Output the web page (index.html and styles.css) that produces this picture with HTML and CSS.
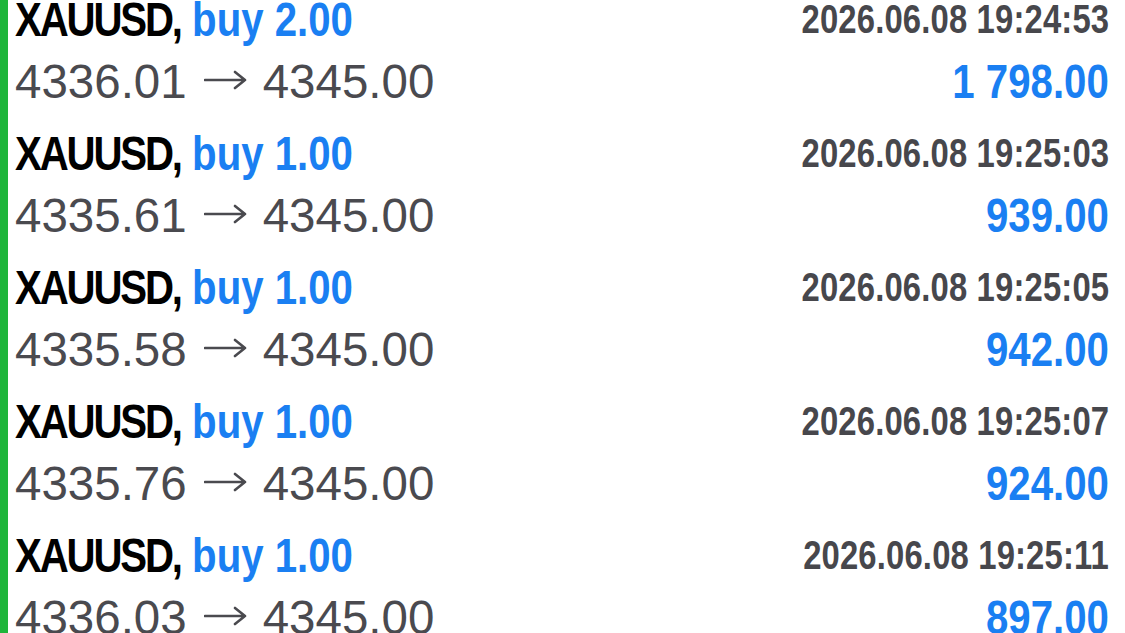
FILE: index.html
```html
<!DOCTYPE html>
<html lang="en">
<head>
	<meta charset="UTF-8"/>
	<title>History</title>
	<link rel="stylesheet" href="styles.css">
</head>
<body>
<div class="deals">
	<div class="deal">
		<div class="deal_head">
			<span class="deal_sym"><span class="deal_name">XAUUSD,</span> <span class="deal_type">buy 2.00</span></span>
			<span class="deal_time">2026.06.08 19:24:53</span>
		</div>
		<div class="deal_body">
			<span class="deal_price">4336.01<svg class="arrow" viewBox="0 0 43 20"><path d="M1 10H41M31 2L41 10L31 18"/></svg>4345.00</span>
			<span class="deal_profit">1 798.00</span>
		</div>
	</div>
	<div class="deal">
		<div class="deal_head">
			<span class="deal_sym"><span class="deal_name">XAUUSD,</span> <span class="deal_type">buy 1.00</span></span>
			<span class="deal_time">2026.06.08 19:25:03</span>
		</div>
		<div class="deal_body">
			<span class="deal_price">4335.61<svg class="arrow" viewBox="0 0 43 20"><path d="M1 10H41M31 2L41 10L31 18"/></svg>4345.00</span>
			<span class="deal_profit">939.00</span>
		</div>
	</div>
	<div class="deal">
		<div class="deal_head">
			<span class="deal_sym"><span class="deal_name">XAUUSD,</span> <span class="deal_type">buy 1.00</span></span>
			<span class="deal_time">2026.06.08 19:25:05</span>
		</div>
		<div class="deal_body">
			<span class="deal_price">4335.58<svg class="arrow" viewBox="0 0 43 20"><path d="M1 10H41M31 2L41 10L31 18"/></svg>4345.00</span>
			<span class="deal_profit">942.00</span>
		</div>
	</div>
	<div class="deal">
		<div class="deal_head">
			<span class="deal_sym"><span class="deal_name">XAUUSD,</span> <span class="deal_type">buy 1.00</span></span>
			<span class="deal_time">2026.06.08 19:25:07</span>
		</div>
		<div class="deal_body">
			<span class="deal_price">4335.76<svg class="arrow" viewBox="0 0 43 20"><path d="M1 10H41M31 2L41 10L31 18"/></svg>4345.00</span>
			<span class="deal_profit">924.00</span>
		</div>
	</div>
	<div class="deal">
		<div class="deal_head">
			<span class="deal_sym"><span class="deal_name">XAUUSD,</span> <span class="deal_type">buy 1.00</span></span>
			<span class="deal_time">2026.06.08 19:25:11</span>
		</div>
		<div class="deal_body">
			<span class="deal_price">4336.03<svg class="arrow" viewBox="0 0 43 20"><path d="M1 10H41M31 2L41 10L31 18"/></svg>4345.00</span>
			<span class="deal_profit">897.00</span>
		</div>
	</div>
</div>
</body>
</html>
```

FILE: styles.css
```css
*{margin:0;padding:0;}
html,body{height:100%;overflow:hidden;background:#fff;}
body{font-family:"Liberation Sans",Arial,sans-serif;}
.deals{min-height:100%;border-left:8px solid #1fb53b;padding:0 16px 0 7px;}
.deal{padding-bottom:9px;}
.deal_head{display:flex;justify-content:space-between;align-items:center;height:38px;line-height:38px;white-space:nowrap;}
.deal_body{display:flex;justify-content:space-between;align-items:baseline;line-height:87px;white-space:nowrap;}
/* condensed bold: Liberation Sans Bold narrowed like Arial Narrow */
.deal_sym,.deal_time,.deal_profit{display:inline-block;font-weight:bold;transform:scaleX(.82);}
.deal_sym{font-size:49px;color:#000;transform-origin:left center;}
.deal_name{letter-spacing:-2.6px;}
.deal_type{color:#1a7ff2;}
.deal_time{font-size:40px;color:#47474c;letter-spacing:.2px;transform-origin:right center;}
.deal_price{font-size:47.5px;color:#4a4a4f;}
.deal_profit{font-size:49px;color:#1a7ff2;transform-origin:right center;}
.arrow{width:43px;height:20px;margin:0 16px 0 17px;vertical-align:8px;}
.arrow path{fill:none;stroke:#4a4a4f;stroke-width:2.6;stroke-linecap:round;stroke-linejoin:round;}
```
